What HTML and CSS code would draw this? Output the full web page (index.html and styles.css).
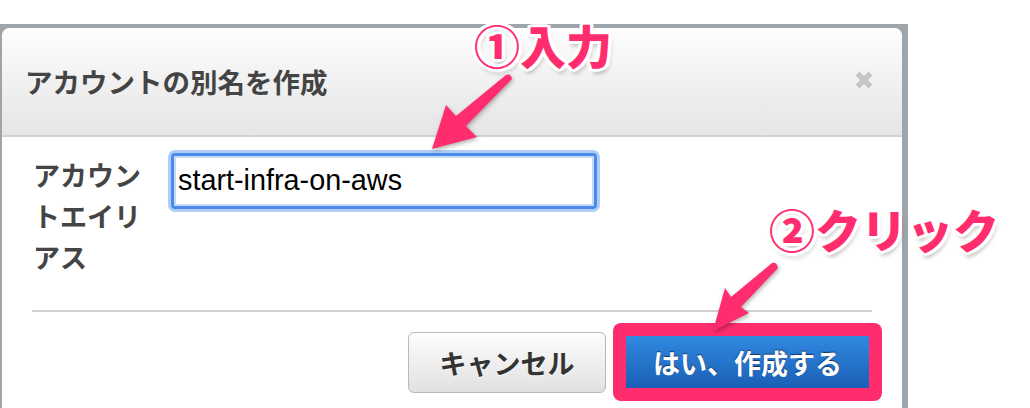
FILE: index.html
```html
<!DOCTYPE html>
<html lang="ja">
<head>
<meta charset="utf-8">
<title>アカウントの別名を作成</title>
<link rel="stylesheet" href="styles.css">
</head>
<body>
<div class="stage">
  <div class="backdrop">
    <div class="dialog">
      <div class="dialog-header">
        <h1 class="dialog-title">アカウントの別名を作成</h1>
        <span class="close" aria-label="閉じる">
          <svg width="18" height="18" viewBox="0 0 18 18"><path d="M2.5 2.5 L15.5 15.5 M15.5 2.5 L2.5 15.5" stroke="#c6c6c6" stroke-width="5.5" stroke-linecap="butt"/></svg>
        </span>
      </div>
      <div class="dialog-body">
        <div class="field-row">
          <label class="field-label" for="alias">アカウントエイリアス</label>
          <input class="text-input" id="alias" type="text" value="start-infra-on-aws" readonly>
        </div>
        <hr class="divider">
        <div class="footer">
          <button class="btn btn-cancel" type="button">キャンセル</button>
          <div class="highlight"><button class="btn btn-primary" type="button">はい、作成する</button></div>
        </div>
      </div>
    </div>
  </div>
  <div class="note note-1">①入力</div>
  <div class="note note-2">②クリック</div>
  <svg class="arrows" width="1030" height="408" viewBox="0 0 1030 408">
    <path d="M506 75 Q511 73 512 79 L466 126 L477 137 L432 149 L446 105 L456 116 Z" fill="#ff2d6e"/>
    <path d="M772 263 Q777 262 778 268 L741 307 L749 313 L713 331 L725 288 L731 297 Z" fill="#ff2d6e"/>
  </svg>
</div>
</body>
</html>
```
FILE: styles.css
```css
html, body {
  margin: 0;
  padding: 0;
  background: #ffffff;
}
body {
  font-family: "Noto Sans CJK JP", "Noto Sans", sans-serif;
}
.stage {
  position: relative;
  width: 1030px;
  height: 408px;
  overflow: hidden;
}
.backdrop {
  margin-top: 24px;
  width: 908px;
  height: 384px;
  box-sizing: border-box;
  padding: 4px 6px 0 2px;
  background: #9da4aa;
}
.dialog {
  height: 100%;
  background: #ffffff;
  border-radius: 8px 8px 0 0;
  overflow: hidden;
}
.dialog-header {
  height: 109px;
  box-sizing: border-box;
  border-bottom: 2px solid #d2d2d2;
  background: linear-gradient(#fdfdfd, #e5e5e5);
  display: flex;
  align-items: center;
  justify-content: space-between;
  padding: 0 29px 0 23px;
}
.dialog-title {
  margin: 0;
  font-size: 27.5px;
  font-weight: 700;
  line-height: 1;
  color: #444444;
}
.close {
  display: flex;
  width: 18px;
  height: 18px;
  margin-top: -3px;
}
.dialog-body {
  padding: 16px 30px 0;
}
.field-row {
  display: flex;
  align-items: flex-start;
  gap: 26px;
  padding-left: 1px;
}
.field-label {
  width: 112px;
  padding-top: 1px;
  font-size: 27px;
  line-height: 41px;
  font-weight: 700;
  color: #444444;
}
.text-input {
  width: 426px;
  height: 56px;
  box-sizing: border-box;
  margin: 0;
  padding: 0 0 2px 4px;
  border: 3px solid #4b8bee;
  border-radius: 4px;
  box-shadow: 0 0 0 3px #b1cdf6, inset 0 0 0 2px #c6dbfa;
  outline: none;
  background: #ffffff;
  font-family: "Liberation Sans", Arial, sans-serif;
  font-size: 28.8px;
  color: #000000;
}
.divider {
  margin: 33px 0 0;
  border: 0;
  height: 2px;
  background: #d0d0d0;
}
.footer {
  margin: 11px -10px 0 0;
  display: flex;
  justify-content: flex-end;
  align-items: center;
  gap: 7px;
}
.btn {
  margin: 0;
  padding: 0;
  font-family: "Noto Sans CJK JP", sans-serif;
  font-size: 27px;
  font-weight: 700;
  cursor: pointer;
}
.btn-cancel {
  width: 198px;
  height: 61px;
  border: 1px solid #b9b9b9;
  border-radius: 6px;
  background: linear-gradient(#fdfdfd, #e1e1e1);
  color: #333333;
  text-shadow: 0 1px 0 #ffffff;
}
.highlight {
  display: flex;
  padding: 13px;
  border-radius: 8px;
  background: #ff2d6e;
}
.btn-primary {
  width: 243px;
  height: 52px;
  border: 0;
  border-radius: 0;
  background: linear-gradient(#3189e0, #1a5fb6);
  color: #ffffff;
  text-shadow: 0 -1px 1px rgba(0, 0, 0, 0.55);
}
.note {
  position: absolute;
  font-family: "Noto Sans CJK JP", sans-serif;
  font-weight: 900;
  font-size: 46px;
  line-height: 1;
  white-space: nowrap;
  color: #ff2d6e;
  text-shadow:
    3px 0 0 #fff, -3px 0 0 #fff, 0 3px 0 #fff, 0 -3px 0 #fff,
    2px 2px 0 #fff, -2px 2px 0 #fff, 2px -2px 0 #fff, -2px -2px 0 #fff,
    3px 2px 0 #fff, -3px 2px 0 #fff, 3px -2px 0 #fff, -3px -2px 0 #fff,
    2px 5px 4px rgba(0, 0, 0, 0.25);
}
.note-1 {
  left: 474px;
  top: 21px;
}
.note-2 {
  left: 769px;
  top: 205px;
}
.arrows {
  position: absolute;
  left: 0;
  top: 0;
  pointer-events: none;
  filter: drop-shadow(1px 2px 2px rgba(0, 0, 0, 0.3));
}
```
